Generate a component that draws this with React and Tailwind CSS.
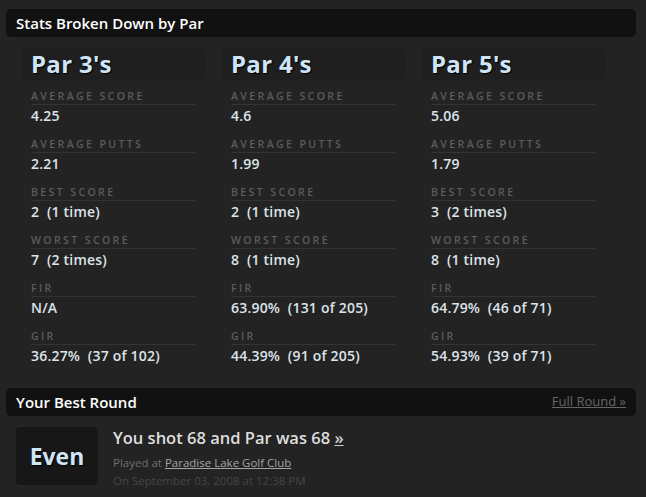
import React from 'react';

const columns = [
  {
    title: "Par 3's",
    stats: [
      ['Average Score', '4.25'],
      ['Average Putts', '2.21'],
      ['Best Score', '2  (1 time)'],
      ['Worst Score', '7  (2 times)'],
      ['FIR', 'N/A'],
      ['GIR', '36.27%  (37 of 102)'],
    ],
  },
  {
    title: "Par 4's",
    stats: [
      ['Average Score', '4.6'],
      ['Average Putts', '1.99'],
      ['Best Score', '2  (1 time)'],
      ['Worst Score', '8  (1 time)'],
      ['FIR', '63.90%  (131 of 205)'],
      ['GIR', '44.39%  (91 of 205)'],
    ],
  },
  {
    title: "Par 5's",
    stats: [
      ['Average Score', '5.06'],
      ['Average Putts', '1.79'],
      ['Best Score', '3  (2 times)'],
      ['Worst Score', '8  (1 time)'],
      ['FIR', '64.79%  (46 of 71)'],
      ['GIR', '54.93%  (39 of 71)'],
    ],
  },
];

const font = { fontFamily: '"Open Sans", "Noto Sans", sans-serif' };

const ParColumn = ({ col }) => (
  <div className="w-[200px]">
    <div className="h-[32px] w-[184px] rounded-[4px] bg-[#1f1f1f] pl-[10px] flex items-center">
      <h3 className="text-[24px] leading-none font-bold text-[#cfe5f8] [text-shadow:1px_1px_1px_#000] tracking-[0.3px]">
        {col.title}
      </h3>
    </div>
    <div className="mt-[9px] pl-[10px]">
      {col.stats.map(([label, value]) => (
        <div key={label} className="h-[48px]">
          <div className="w-[165px] border-b border-[#333] text-[10.5px] leading-[14px] pb-[1px] uppercase tracking-[2.4px] text-[#5c5c5c] font-semibold">
            {label}
          </div>
          <div className="mt-[2px] text-[14px] leading-[18px] tracking-[0.2px] text-[#dce3ea] whitespace-pre font-semibold">
            {value}
          </div>
        </div>
      ))}
    </div>
  </div>
);

export default function App() {
  return (
    <div style={font} className="w-[646px] h-[497px] overflow-hidden bg-[#232323] pt-[9px] pl-[6px] pr-[10px]">
      <div className="h-[28px] rounded-[5px] bg-[#111] pl-[10px] flex items-center">
        <h2 className="text-[15px] font-semibold text-white">Stats Broken Down by Par</h2>
      </div>

      <div className="mt-[11px] ml-[15px] flex">
        {columns.map((col) => (
          <ParColumn key={col.title} col={col} />
        ))}
      </div>

      <div className="mt-[11px] h-[28px] rounded-[5px] bg-[#111] pl-[10px] pr-[10px] flex items-center justify-between">
        <h2 className="text-[15px] font-semibold text-white">Your Best Round</h2>
        <a href="#" className="text-[13px] text-[#666] underline">Full Round »</a>
      </div>

      <div className="mt-[11px] ml-[10px] flex gap-[15px]">
        <div className="w-[82px] h-[58px] rounded-[4px] bg-[#171717] flex items-center justify-center">
          <span className="text-[23px] font-bold text-[#cfe5f8] [text-shadow:1px_1px_1px_#000]">Even</span>
        </div>
        <div className="pt-[1px]">
          <p className="text-[16.5px] leading-[20px] text-[#dedede] font-semibold">
            You shot 68 and Par was 68 <a href="#" className="underline text-[#ccc]">»</a>
          </p>
          <p className="mt-[7px] text-[11.5px] leading-[16px] text-[#6f6f6f]">
            Played at <a href="#" className="underline text-[#a5a5a5]">Paradise Lake Golf Club</a>
          </p>
          <p className="mt-[2px] text-[11.5px] leading-[16px] text-[#454545]">On September 03, 2008 at 12:38 PM</p>
        </div>
      </div>
    </div>
  );
}
